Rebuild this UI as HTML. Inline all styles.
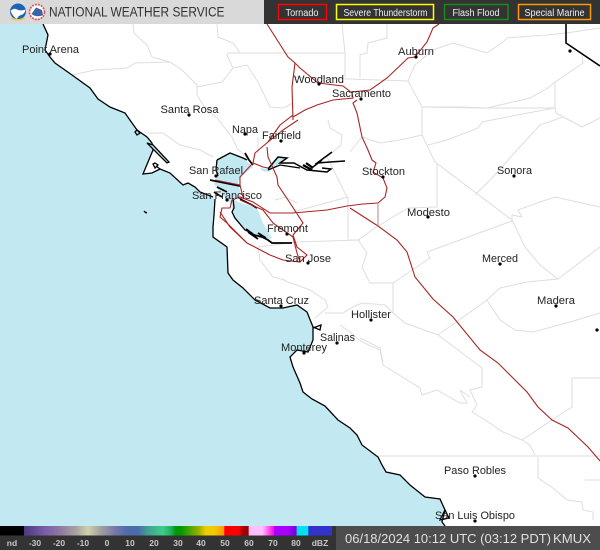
<!DOCTYPE html>
<html><head><meta charset="utf-8"><title>Radar</title>
<style>
html,body{margin:0;padding:0;background:#fff}
svg{display:block}
text{font-family:"Liberation Sans",sans-serif}
.c text{font-size:11px;fill:#222}
.l text{font-size:8.5px;font-weight:bold;fill:#c8c8c8;text-anchor:middle}
.b text{font-size:10px;fill:#f0f0f0;text-anchor:middle}
</style></head><body>
<svg width="600" height="550" viewBox="0 0 600 550" xmlns="http://www.w3.org/2000/svg">
<rect width="600" height="550" fill="#fff"/>
<!-- sea -->
<path fill="#c2e9f1" d="M0 24L43 24L48 35L45 50L50 57L55 63L72 75L90 88L98 99L110 107L125 113L137 130L147 137L152 143L153 150L143 174L152 173L160 169L170 173L183 185L188 183L195 187L200 192L213 197L215 199L214 215L213 227L213 237L227 247L228 273L233 280L243 288L255 300L270 308L283 308L297 305L307 312L313 327L313 340L308 352L297 350L290 357L293 367L300 383L303 392L312 399L325 406L338 420L350 428L357 435L362 445L378 457L382 465L386 472L400 475L410 485L425 497L440 499L445 510L442 522L445 530L0 530Z"/>
<!-- bays -->
<path fill="#c2e9f1" d="M217 160L230 153L243 158L253 167L243 175L238 181L241 196L233 198L238 202L257 208L263 223L272 238L268 240L245 230L233 218L232 205L222 195L214 184L218 175Z"/>
<path fill="#c2e9f1" d="M260 168L268 169L278 157L287 158L280 163L268 172L262 171Z"/>
<!-- county lines -->
<g fill="none" stroke="#dedede" stroke-width="1">
<path d="M133 24L134 33L147 45L152 57L170 62L182 70L197 85L197 95L205 108L217 118L232 137L237 148L252 163"/>
<path d="M72 75L95 70L127 68L135 63L170 62"/>
<path d="M197 87L222 82L233 68L227 55L228 53L300 53M233 68L247 65L258 82L270 107L283 108L293 103"/>
<path d="M217 24L218 37L233 43L240 53"/>
<path d="M147 133L163 133L180 145L200 150L213 157"/>
<path d="M387 24L387 38L368 43L367 53L360 55L360 77M342 24L345 53L345 77M300 53L345 53M293 77L408 81L422 107L422 135"/>
<path d="M408 81L415 65L433 50L453 43L487 53L503 42L507 38L547 35L566 33L600 28"/>
<path d="M422 107L460 107L487 108L530 98L548 88L555 82L583 63L582 55M555 82L555 108L556 113L582 127L600 118M423 107L480 108L555 108"/>
<path d="M422 135L435 162L512 220L525 247L540 265L558 279L600 247"/>
<path d="M428 145L447 140L478 128L482 122L517 115L555 108"/>
<path d="M475 195L493 177L517 150L540 125L563 117"/>
<path d="M437 163L437 207L408 208L378 226L358 240L350 240M358 240L367 253L362 267L370 283L393 283L393 297M393 283L430 258L427 252L512 221"/>
<path d="M512 215L522 217L518 210L540 202L555 197L600 207M512 221L512 215"/>
<path d="M422 135L400 140L380 143L362 137L350 152"/>
<path d="M558 279L527 282L500 288L487 300L438 335L405 323L393 313L393 297M487 300L500 320L515 330L533 332L570 322L600 313"/>
<path d="M438 335L482 368L482 387L470 390L477 405L472 412L482 418L503 432L522 440L552 420L572 407L572 378L600 378M522 440L530 445L535 455"/>
<path d="M378 456L600 456M538 457L538 478L553 488L567 500L582 502L583 510L593 512L593 520M585 480L600 480"/>
<path d="M350 332L362 342L380 350L383 365L420 388L422 395L437 390L460 403L467 403L460 390L470 397"/>
<path d="M283 280L310 290L325 300L328 307L315 318M325 313L343 313L353 307L362 303L385 305L393 313"/>
<path d="M360 338L380 348L383 362M350 332L340 325"/>
<path d="M258 247L297 242L360 240M348 197L348 240M293 212L348 197"/>
<path d="M258 247L260 260L273 277L285 280"/>
<path d="M328 120L330 128L342 135L341 145L327 157L347 197"/>
<path d="M258 137L258 153M275 200L285 197L297 203"/>
</g>
<!-- coast -->
<g fill="none" stroke="#000" stroke-width="1.3">
<path d="M43 24L48 35L45 50L50 57L55 63L72 75L90 88L98 99L110 107L125 113L137 130L147 137L152 143L153 150L143 174L152 173L160 169L170 173L183 185L188 183L195 187L200 192L213 197"/>
<path d="M215 199L214 215L213 227L213 237L227 247L228 273L233 280L243 288L255 300L270 308L283 308L297 305L307 312L313 327L313 340L308 352L297 350L290 357L293 367L300 383L303 392L312 399L325 406L338 420L350 428L357 435L362 445L378 457L382 465L386 472L400 475L410 485L425 497L440 499L445 510L442 522L445 526"/>
<path fill="#c2e9f1" d="M147 143L153 145L169 162L167 163L152 148Z"/>
<path d="M137 130L135 132L137 135L140 133Z"/>
<path d="M153 164L155 168L158 165L155 163ZM156 166L160 169"/>
<path d="M313 328L321 325L320 330L313 327"/>
<path d="M217 160L230 153L243 158L247 160M217 160L216 170L218 176"/>
<path stroke-width="1.8" d="M210 180L225 183L240 186M217 187L227 192M214 192L222 197M245 153L249 160L253 165"/>
<path d="M233 198L234 208L232 212L235 218L245 230L252 233"/>
<path stroke-width="1.8" d="M240 199L252 205L257 208M246 229L254 235L262 237L268 240L272 243L292 243M248 232L258 239M258 233L266 238"/>
<path stroke-width="1.5" d="M268 169L278 157L287 158L280 163L294 163L307 170L327 172L331 169L322 168M330 162L345 161M330 162L317 163L332 152M313 167L322 160"/>
<path stroke-width="2.2" d="M303 165L312 170M306 163L313 168"/>
<path d="M268 170L280 165L300 168"/>
<path d="M144 211L146 213M147 213L145 212"/>
<path stroke-width="1.6" d="M566 24L566 43L600 66"/>
<path d="M445 510L440 520L449 518Z"/>
</g>
<!-- roads -->
<g fill="none" stroke="#a82424" stroke-width="1.1">
<path d="M267 24L288 57L295 63L300 68L318 83L343 86L352 93L353 98L333 100L317 105L305 110L293 117"/>
<path d="M295 63L292 87L293 120"/>
<path d="M352 92L370 90L387 78L408 58L415 57L427 42L433 28L439 24"/>
<path d="M298 120L283 130L268 142L255 153L253 163L263 167L268 168"/>
<path d="M267 147L268 157L277 177L278 185L290 203L303 223L293 235L297 247L307 255L300 262L283 260L270 255L247 243L227 223L220 217L222 208L230 208L232 200L240 197L253 202L270 213L293 213L327 210L347 206L363 204L378 203L385 197L387 188L383 178L373 172L376 163L372 160L368 150L362 137L357 113L353 103L357 100"/>
<path d="M253 163L240 177L240 185L243 197M215 180L240 185"/>
<path d="M240 200L263 210L273 223L293 237L297 253L300 262M220 212L230 227L247 243"/>
<path d="M293 115L280 125L268 142"/>
<path d="M350 208L378 226L397 240L407 252L415 277L433 299L453 317L480 350L498 363L527 392L538 407L552 420L568 428L588 447L600 461"/>
<path stroke="#d08a8a" d="M378 203L378 226"/>
</g>
<!-- city dots -->
<g fill="#000">
<circle cx="50" cy="54" r="1.6"/><circle cx="189" cy="115" r="1.6"/><circle cx="245" cy="134" r="1.6"/><circle cx="281" cy="141" r="1.6"/><circle cx="319" cy="84" r="1.6"/><circle cx="361" cy="99" r="1.6"/><circle cx="416" cy="57" r="1.6"/><circle cx="383" cy="177" r="1.6"/><circle cx="514" cy="176" r="1.6"/><circle cx="428" cy="217" r="1.6"/><circle cx="500" cy="264" r="1.6"/><circle cx="556" cy="306" r="1.6"/><circle cx="371" cy="320" r="1.6"/><circle cx="337" cy="343" r="1.6"/><circle cx="304" cy="353" r="1.6"/><circle cx="281" cy="306" r="1.6"/><circle cx="308" cy="263" r="1.6"/><circle cx="287" cy="234" r="1.6"/><circle cx="227" cy="200" r="1.6"/><circle cx="216" cy="176" r="1.6"/><circle cx="475" cy="476" r="1.6"/><circle cx="475" cy="521" r="1.6"/><circle cx="570" cy="51" r="1.6"/><circle cx="597" cy="330" r="1.6"/>
</g>
<!-- city labels -->
<g class="c">
<text x="22" y="53" textLength="57" lengthAdjust="spacingAndGlyphs">Point Arena</text>
<text x="160.500" y="113" textLength="58" lengthAdjust="spacingAndGlyphs">Santa Rosa</text>
<text x="232" y="133" textLength="26" lengthAdjust="spacingAndGlyphs">Napa</text>
<text x="262" y="139" textLength="39" lengthAdjust="spacingAndGlyphs">Fairfield</text>
<text x="294" y="83" textLength="50" lengthAdjust="spacingAndGlyphs">Woodland</text>
<text x="332" y="97" textLength="59" lengthAdjust="spacingAndGlyphs">Sacramento</text>
<text x="398" y="55" textLength="36" lengthAdjust="spacingAndGlyphs">Auburn</text>
<text x="362" y="175" textLength="43" lengthAdjust="spacingAndGlyphs">Stockton</text>
<text x="497" y="174" textLength="35" lengthAdjust="spacingAndGlyphs">Sonora</text>
<text x="407" y="216" textLength="43" lengthAdjust="spacingAndGlyphs">Modesto</text>
<text x="482" y="262" textLength="36" lengthAdjust="spacingAndGlyphs">Merced</text>
<text x="537" y="304" textLength="38" lengthAdjust="spacingAndGlyphs">Madera</text>
<text x="351" y="318" textLength="40" lengthAdjust="spacingAndGlyphs">Hollister</text>
<text x="320" y="341" textLength="35" lengthAdjust="spacingAndGlyphs">Salinas</text>
<text x="281" y="351" textLength="46" lengthAdjust="spacingAndGlyphs">Monterey</text>
<text x="254" y="304" textLength="55" lengthAdjust="spacingAndGlyphs">Santa Cruz</text>
<text x="285" y="262" textLength="46" lengthAdjust="spacingAndGlyphs">San Jose</text>
<text x="267" y="232" textLength="41" lengthAdjust="spacingAndGlyphs">Fremont</text>
<text x="192" y="199" textLength="70" lengthAdjust="spacingAndGlyphs">San Francisco</text>
<text x="189" y="174" textLength="54" lengthAdjust="spacingAndGlyphs">San Rafael</text>
<text x="444" y="474" textLength="62" lengthAdjust="spacingAndGlyphs">Paso Robles</text>
<text x="435" y="519" textLength="80" lengthAdjust="spacingAndGlyphs">San Luis Obispo</text>
</g>
<!-- header -->
<rect x="0" y="0" width="264" height="24" fill="#d9d9d9"/>
<rect x="264" y="0" width="336" height="24" fill="#333"/>
<circle cx="18" cy="11.500" r="8" fill="#1c63b7"/>
<path d="M10.500 11Q14 7 18 10Q22 11 25.500 9.500Q25 14 21 15Q18 16 17 19Q13 17 10.500 11Z" fill="#fff"/>
<path d="M12 17Q18 21 24 17L25 19Q18 22 11 19Z" fill="#e5c84a"/>
<circle cx="37" cy="12" r="7.500" fill="#fff" stroke="#e05a5a" stroke-width="1.800" stroke-dasharray="2 1"/>
<path d="M31.500 14L36 7.500L42 10L43 15Q37 18 31.500 14Z" fill="#3a64a8"/>
<text x="49" y="16.500" font-size="13.500" fill="#333" textLength="175.500" lengthAdjust="spacingAndGlyphs">NATIONAL WEATHER SERVICE</text>
<g class="b" fill="none" stroke-width="1.500">
<rect x="278.500" y="4.500" width="48" height="15" stroke="#f00"/>
<rect x="336.500" y="4.500" width="97" height="15" stroke="#ff0"/>
<rect x="444.500" y="4.500" width="63.500" height="15" stroke="#1a8a1a"/>
<rect x="518.500" y="4.500" width="72" height="15" stroke="#ff9900"/>
<text x="302" y="16" stroke="none" textLength="33" lengthAdjust="spacingAndGlyphs">Tornado</text>
<text x="385.500" y="16" stroke="none" textLength="84" lengthAdjust="spacingAndGlyphs">Severe Thunderstorm</text>
<text x="476" y="16" stroke="none" textLength="47" lengthAdjust="spacingAndGlyphs">Flash Flood</text>
<text x="554.500" y="16" stroke="none" textLength="60" lengthAdjust="spacingAndGlyphs">Special Marine</text>
</g>
<!-- legend -->
<rect x="0" y="526" width="336" height="24" fill="#333"/>
<rect x="336" y="526" width="264" height="24" fill="#4d4d4d"/>
<defs><linearGradient id="g" gradientUnits="userSpaceOnUse" x1="0" x2="332" y1="0" y2="0">
<stop offset="0.072" stop-color="#000"/><stop offset="0.073" stop-color="#4e3a80"/><stop offset="0.135" stop-color="#7c5caa"/><stop offset="0.180" stop-color="#8f78a0"/><stop offset="0.230" stop-color="#a8a4a0"/><stop offset="0.265" stop-color="#d0d0ac"/><stop offset="0.300" stop-color="#a4a4a0"/><stop offset="0.345" stop-color="#7878aa"/><stop offset="0.380" stop-color="#4f6cab"/><stop offset="0.415" stop-color="#4a6cac"/><stop offset="0.445" stop-color="#42a090"/><stop offset="0.490" stop-color="#40cc88"/><stop offset="0.515" stop-color="#20b060"/><stop offset="0.530" stop-color="#009900"/><stop offset="0.545" stop-color="#009900"/><stop offset="0.600" stop-color="#a0b000"/><stop offset="0.620" stop-color="#eecc00"/><stop offset="0.645" stop-color="#eecc00"/><stop offset="0.675" stop-color="#ff9900"/><stop offset="0.676" stop-color="#ff0000"/><stop offset="0.720" stop-color="#ff0000"/><stop offset="0.730" stop-color="#aa0000"/><stop offset="0.748" stop-color="#990000"/><stop offset="0.750" stop-color="#ffc0ff"/><stop offset="0.790" stop-color="#ffc0ff"/><stop offset="0.825" stop-color="#ff00e0"/><stop offset="0.826" stop-color="#aa00ff"/><stop offset="0.865" stop-color="#aa00ff"/><stop offset="0.893" stop-color="#7700dd"/><stop offset="0.894" stop-color="#00e0f0"/><stop offset="0.928" stop-color="#00e0f0"/><stop offset="0.929" stop-color="#3333cc"/>
</linearGradient></defs>
<rect x="0" y="526" width="332" height="9.500" fill="url(#g)"/>
<g class="l">
<text x="12" y="546">nd</text><text x="35" y="546">-30</text><text x="59" y="546">-20</text><text x="83" y="546">-10</text><text x="107" y="546">0</text><text x="130" y="546">10</text><text x="154" y="546">20</text><text x="178" y="546">30</text><text x="201" y="546">40</text><text x="225" y="546">50</text><text x="249" y="546">60</text><text x="273" y="546">70</text><text x="296" y="546">80</text><text x="320" y="546">dBZ</text>
</g>
<text x="345" y="543" font-size="13" fill="#e0e0e0" textLength="206" lengthAdjust="spacingAndGlyphs">06/18/2024 10:12 UTC (03:12 PDT)</text>
<text x="553" y="543" font-size="13" fill="#e0e0e0" textLength="38" lengthAdjust="spacingAndGlyphs">KMUX</text>
</svg>
</body></html>
